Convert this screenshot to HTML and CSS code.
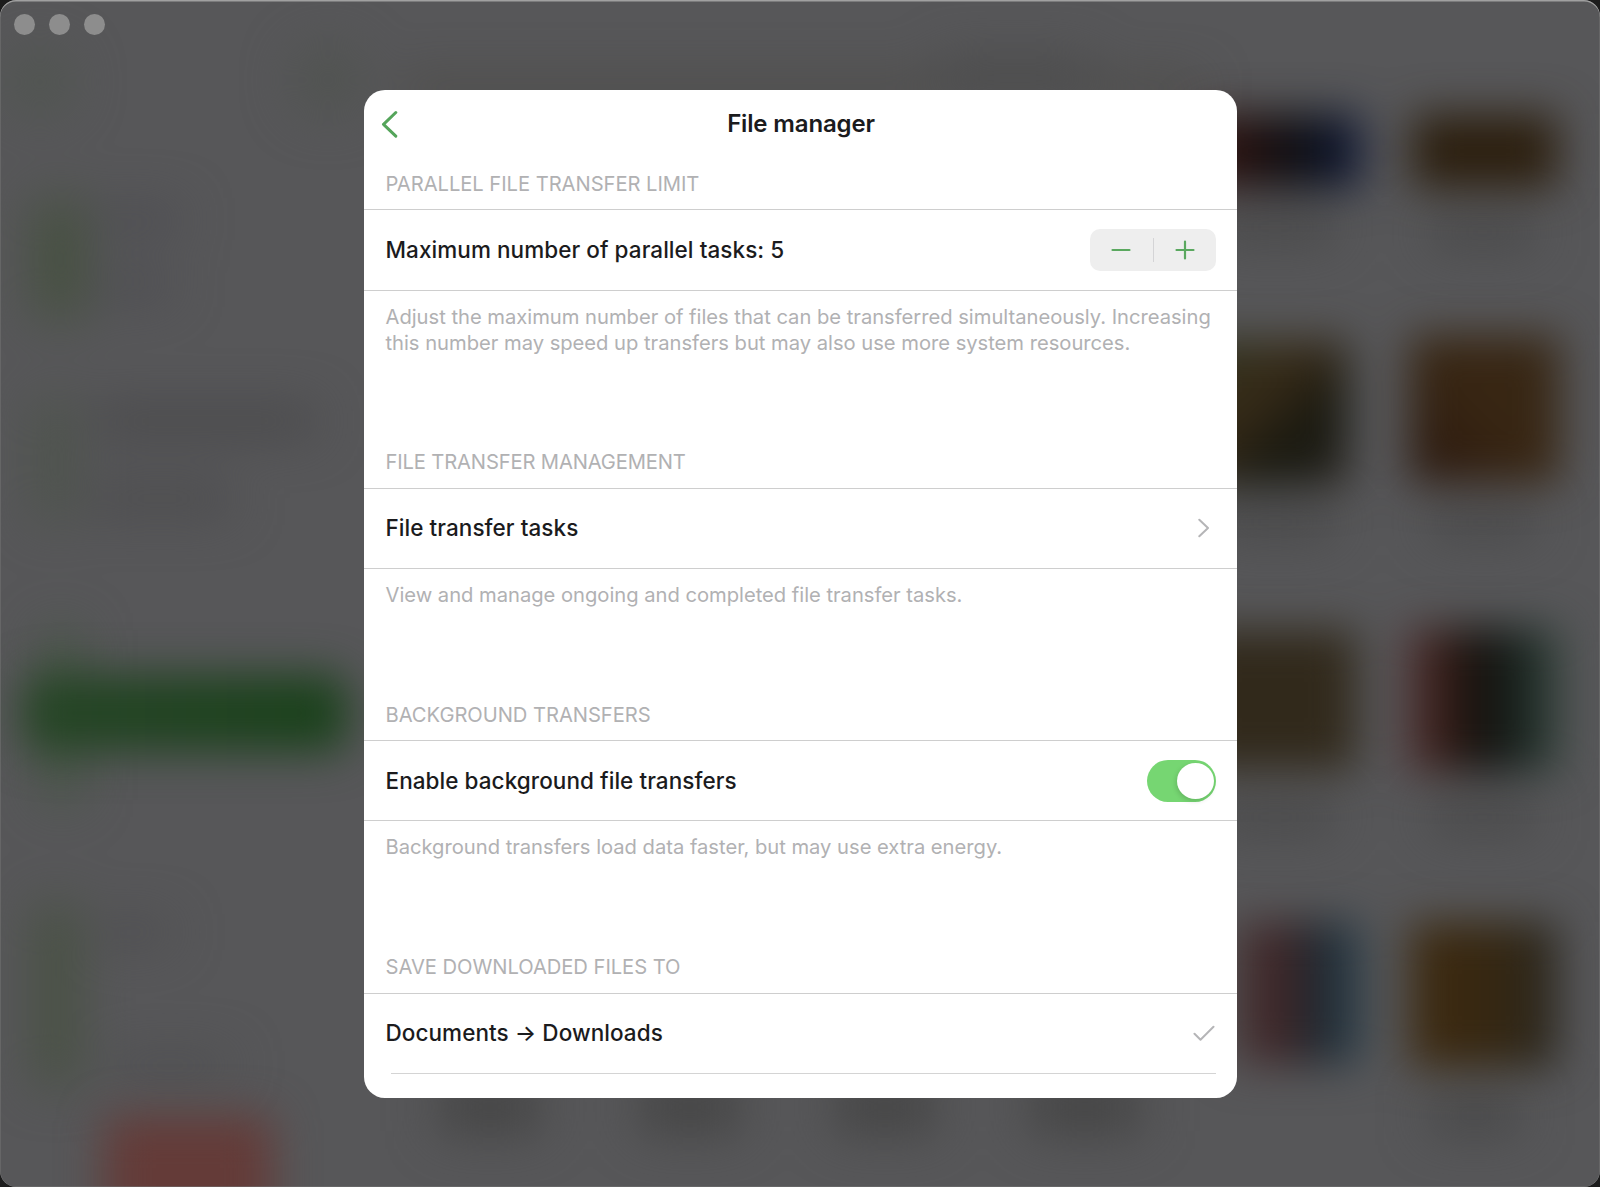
FILE: index.html
```html
<!DOCTYPE html>
<html lang="en">
<head>
<meta charset="utf-8">
<title>File manager</title>
<link rel="stylesheet" href="styles.css">
</head>
<body>
<div class="window">
  <svg class="backdrop" viewBox="0 0 1600 1187" aria-hidden="true">
    <defs>
      <filter id="soft" color-interpolation-filters="sRGB" filterUnits="userSpaceOnUse" x="-100" y="-100" width="1800" height="1400"><feGaussianBlur stdDeviation="22"/></filter>
      <filter id="softer" color-interpolation-filters="sRGB" filterUnits="userSpaceOnUse" x="-100" y="-100" width="1800" height="1400"><feGaussianBlur stdDeviation="25"/></filter>
      <linearGradient id="c1"><stop offset="0" stop-color="#351310"/><stop offset=".4" stop-color="#1b0f0f"/><stop offset=".62" stop-color="#0c0e14"/><stop offset="1" stop-color="#101a3c"/></linearGradient>
      <linearGradient id="c2" x2="1" y2="1"><stop offset="0" stop-color="#2c331e"/><stop offset=".4" stop-color="#382b18"/><stop offset=".7" stop-color="#16170f"/><stop offset="1" stop-color="#2a251f"/></linearGradient>
      <linearGradient id="c3"><stop offset="0" stop-color="#563436"/><stop offset=".28" stop-color="#301a14"/><stop offset=".52" stop-color="#10110e"/><stop offset=".75" stop-color="#1c2622"/><stop offset="1" stop-color="#33463d"/></linearGradient>
      <linearGradient id="c4"><stop offset="0" stop-color="#453b3b"/><stop offset=".35" stop-color="#432527"/><stop offset=".58" stop-color="#25252a"/><stop offset=".82" stop-color="#20323e"/><stop offset="1" stop-color="#30434e"/></linearGradient>
      <linearGradient id="c5" x1="1" x2="0" y2="1"><stop offset="0" stop-color="#372715"/><stop offset=".5" stop-color="#382613"/><stop offset="1" stop-color="#29160d"/></linearGradient>
      <linearGradient id="c6"><stop offset="0" stop-color="#3e2a10"/><stop offset=".55" stop-color="#362711"/><stop offset="1" stop-color="#28261f"/></linearGradient>
      <linearGradient id="pill"><stop offset="0" stop-color="#264526"/><stop offset="1" stop-color="#1a411b"/></linearGradient>
    </defs>
    <g filter="url(#softer)">
      <circle cx="40" cy="82" r="32" fill="#505550"/>
      <circle cx="328" cy="80" r="34" fill="#505350"/>
      <rect x="34" y="200" width="50" height="118" fill="#45503f"/>
      <rect x="100" y="208" width="80" height="22" fill="#4a4a4f"/>
      <rect x="100" y="275" width="70" height="22" fill="#4a4a4f"/>
      <rect x="36" y="400" width="36" height="120" fill="#4c534a"/>
      <rect x="95" y="408" width="220" height="26" fill="#464648"/>
      <rect x="90" y="486" width="140" height="26" fill="#4a4a4c"/>
      <rect x="36" y="905" width="40" height="180" fill="#465040"/>
      <rect x="100" y="922" width="70" height="20" fill="#4b4b4d"/>
      <rect x="110" y="1056" width="120" height="18" fill="#4b4b4d"/>
      <rect x="44" y="630" width="34" height="170" fill="#465645"/>
      <rect x="400" y="82" width="800" height="14" fill="#45433c"/>
      <rect x="940" y="58" width="150" height="40" fill="#4b4b4b"/>
    </g>
    <g filter="url(#softer)" fill="#434343">
      <rect x="1215" y="215" width="120" height="24"/><rect x="1430" y="220" width="105" height="24"/>
      <rect x="1215" y="510" width="120" height="24"/><rect x="1430" y="510" width="105" height="24"/>
      <rect x="1215" y="805" width="120" height="24"/><rect x="1430" y="805" width="105" height="24"/>
      <rect x="1430" y="1100" width="90" height="30"/>
      <rect x="440" y="1082" width="100" height="50"/><rect x="640" y="1082" width="100" height="50"/>
      <rect x="835" y="1082" width="100" height="50"/><rect x="1030" y="1082" width="110" height="50"/>
    </g>
    <g filter="url(#soft)">
      <rect x="24" y="674" width="324" height="78" rx="18" fill="url(#pill)"/>
      <rect x="104" y="1116" width="168" height="120" rx="10" fill="#643b38"/>
      <rect x="1200" y="114" width="162" height="74" fill="url(#c1)"/>
      <rect x="1412" y="114" width="146" height="74" fill="#2c1f0f"/>
      <rect x="1190" y="340" width="158" height="146" fill="url(#c2)"/>
      <rect x="1410" y="335" width="150" height="148" fill="url(#c5)"/>
      <rect x="1190" y="630" width="166" height="140" fill="#31291b"/>
      <rect x="1406" y="628" width="154" height="144" fill="url(#c3)"/>
      <rect x="1232" y="922" width="130" height="142" fill="url(#c4)"/>
      <rect x="1410" y="922" width="148" height="146" fill="url(#c6)"/>
    </g>
  </svg>
  <div class="lights"><i class="light"></i><i class="light"></i><i class="light"></i></div>
  <main class="sheet">
    <header class="bar">
      <svg class="back" width="18" height="28" viewBox="0 0 18 28"><path d="M15.800 2.500 3.500 14.300l12.300 11.800"/></svg>
      <h1 class="title">File manager</h1>
    </header>
    <section class="group first">
      <h2 class="heading">PARALLEL FILE TRANSFER LIMIT</h2>
      <div class="row">
        <span class="label">Maximum number of parallel tasks: 5</span>
        <div class="stepper">
          <svg class="sign" width="20" height="20" viewBox="0 0 20 20"><path d="M1.500 10h17"/></svg>
          <i class="divider"></i>
          <svg class="sign" width="20" height="20" viewBox="0 0 20 20"><path d="M1.500 10h17M10 1.500v17"/></svg>
        </div>
      </div>
      <p class="note">Adjust the maximum number of files that can be transferred simultaneously. Increasing<br>this number may speed up transfers but may also use more system resources.</p>
    </section>
    <section class="group">
      <h2 class="heading narrow">FILE TRANSFER MANAGEMENT</h2>
      <div class="row">
        <span class="label">File transfer tasks</span>
        <svg class="chevron" width="12" height="20" viewBox="0 0 12 20"><path d="M1.300 1.700 10 10l-8.700 8.300"/></svg>
      </div>
      <p class="note">View and manage ongoing and completed file transfer tasks.</p>
    </section>
    <section class="group">
      <h2 class="heading">BACKGROUND TRANSFERS</h2>
      <div class="row">
        <span class="label">Enable background file transfers</span>
        <span class="toggle"><i class="knob"></i></span>
      </div>
      <p class="note">Background transfers load data faster, but may use extra energy.</p>
    </section>
    <section class="group">
      <h2 class="heading">SAVE DOWNLOADED FILES TO</h2>
      <div class="row last">
        <span class="label">Documents → Downloads</span>
        <svg class="check" width="22" height="16" viewBox="0 0 22 16"><path d="M1.500 8.800 7.500 14.800 20.500 1.800"/></svg>
      </div>
      <div class="inset"></div>
    </section>
  </main>
</div>
</body>
</html>
```
FILE: styles.css
```css
* { box-sizing: border-box; }
body { margin: 0; background: #1c1c1c; font-family: Inter, "Liberation Sans", sans-serif; }
.window {
  position: relative; display: flex; justify-content: center; align-items: flex-start;
  width: 1600px; height: 1187px; padding-top: 90px; padding-left: 1px; overflow: hidden;
  background: #575759; border-radius: 16px;
}
.window::after {
  content: ""; position: absolute; inset: 0; border-radius: 16px;
  box-shadow: inset 0 1.5px 0 #a0a0a0, inset 0 0 0 .5px #777; pointer-events: none;
}
.backdrop { position: absolute; left: 0; top: 0; width: 1600px; height: 1187px; }
.lights { position: absolute; left: 14px; top: 14px; display: flex; gap: 14px; }
.light { width: 21px; height: 21px; border-radius: 50%; background: #8d8d8d; }
.sheet {
  position: relative; width: 873px; height: 1008px; overflow: hidden;
  background: #fff; border-radius: 21px;
}
.bar { display: grid; grid-template-columns: 50px 1fr 50px; align-items: center; height: 64px; }
.back { margin-left: 16px; margin-top: 3px; fill: none; stroke: #55a55b; stroke-width: 3; stroke-linecap: round; stroke-linejoin: round; }
.title { margin: 0; padding: 3px 0 0 1px; font-size: 24px; font-weight: 600; letter-spacing: -.15px; text-align: center; color: #1b1b1d; }
.group { height: 252.500px; }
.first { height: 278.600px; }
.heading {
  height: 55px; margin: 0; padding: 15.500px 21.500px 0; font-size: 20.200px; line-height: 28px;
  font-weight: 400; letter-spacing: -.05px; color: #b1b1b3; white-space: nowrap;
}
.heading.narrow { letter-spacing: -.15px; }
.first .heading { padding-top: 16px; }
.row {
  display: flex; align-items: center; justify-content: space-between; height: 81px; padding: 0 21px 0 21.500px;
  border-top: 1px solid #cecece; border-bottom: 1px solid #cecece;
}
.first .row { height: 82px; }
.label { font-size: 22.500px; line-height: 28px; font-weight: 500; letter-spacing: .06px; color: #1b1b1d; white-space: nowrap; }
.stepper { display: grid; grid-template-columns: 1fr 1px 1fr; align-items: center; justify-items: center; width: 126px; height: 42px; border-radius: 10px; background: #eee; }
.sign { fill: none; stroke: #5aa85f; stroke-width: 2.200; stroke-linecap: round; }
.divider { width: 1px; height: 24px; background: #d4d4d6; }
.note { margin: 0; padding: 13px 21.500px 0; font-size: 20.200px; line-height: 25.600px; letter-spacing: -.02px; color: #b1b1b3; white-space: nowrap; }
.chevron, .check { fill: none; stroke: #b5b5b7; stroke-width: 2; stroke-linecap: round; stroke-linejoin: round; }
.chevron { margin-right: 6px; }
.check { margin-right: 1px; }
.toggle { display: flex; justify-content: flex-end; width: 69px; height: 42px; padding: 3px 2px; border-radius: 21px; background: #76d672; }
.knob { width: 37px; height: 36px; border-radius: 50%; background: #fff; box-shadow: -1px 2px 5px rgba(0, 0, 0, .15); }
.row.last { height: 80px; border-bottom: 0; }
.inset { height: 1px; margin: 0 21px 0 27px; background: #d4d4d4; }
```
